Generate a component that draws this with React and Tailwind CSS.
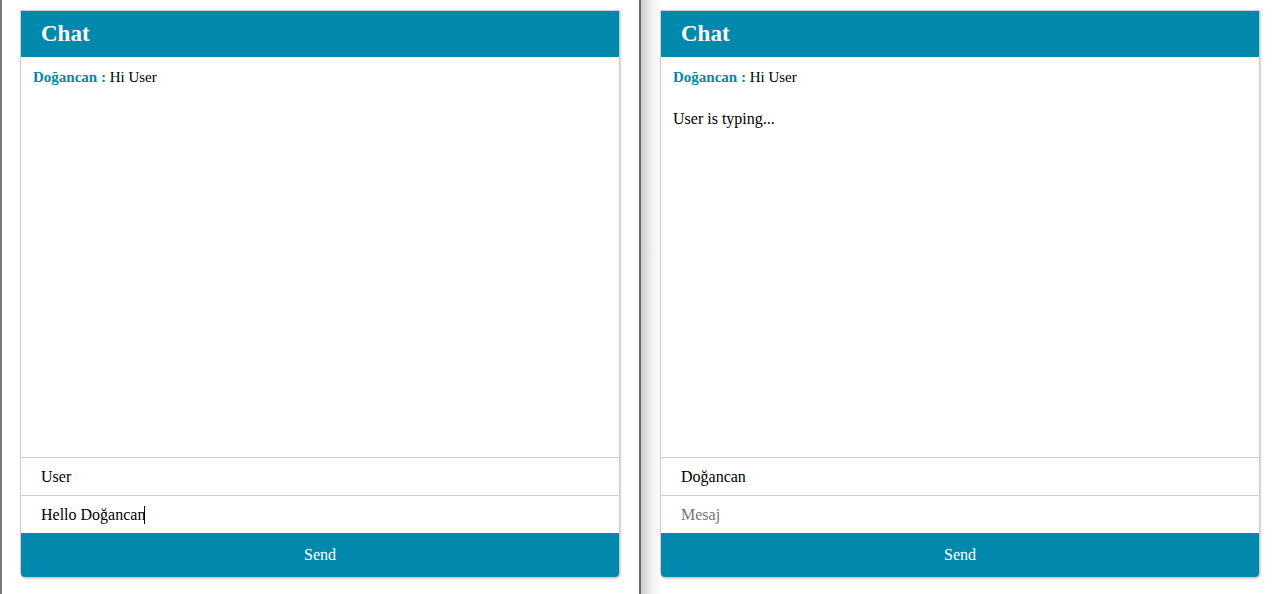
import React from 'react';

function ChatCard({ messages, typing, name, draft, focused }) {
  return (
    <div className="flex h-[568px] w-[600px] flex-col overflow-hidden rounded-b-[5px] border border-[#cccccc] bg-white shadow-[1px_1px_2px_rgba(0,0,0,0.18)]">
      {/* header */}
      <div className="flex h-[46px] items-center bg-[#0088ad] pl-5 text-[23px] font-bold text-white">
        Chat
      </div>

      {/* messages */}
      <div className="flex-1 px-3 pb-3 pt-[11px] text-[16px] leading-[18px] text-black">
        {messages.map((m, i) => (
          <div key={i} className="text-[15px]">
            <span className="font-bold text-[#0088ad]">{m.from} :</span> {m.text}
          </div>
        ))}
        {typing && <div className="mt-[24px]">{typing}</div>}
      </div>

      {/* inputs */}
      <div className="flex h-[38px] items-center border-t border-[#cccccc] pl-5 text-[16px] text-black">
        {name}
      </div>
      <div className="flex h-[38px] items-center border-t border-[#cccccc] pl-5 text-[16px]">
        {draft ? (
          <span className="text-black">{draft}</span>
        ) : (
          <span className="text-[#757575]">Mesaj</span>
        )}
        {focused && <span className="ml-[-1px] inline-block h-[18px] w-px bg-black" />}
      </div>

      <button className="h-[44px] bg-[#0088ad] text-[16px] text-white">Send</button>
    </div>
  );
}

export default function App() {
  return (
    <div
      className="flex h-[594px] w-[1276px] overflow-hidden bg-white"
      style={{ fontFamily: '"Liberation Serif", "Times New Roman", serif' }}
    >
      {/* left window */}
      <div className="w-[641px] shrink-0 border-l-2 border-r-2 border-l-[#7a7a7a] border-r-[#696969] pl-[18px] pt-[10px]">
        <ChatCard
          messages={[{ from: 'Doğancan', text: 'Hi User' }]}
          name="User"
          draft="Hello Doğancan"
          focused
        />
      </div>

      {/* right window */}
      <div className="flex-1 bg-[linear-gradient(to_right,#cdcdcd,#f4f4f4_12px,#ffffff_22px)] pl-[19px] pt-[10px]">
        <ChatCard
          messages={[{ from: 'Doğancan', text: 'Hi User' }]}
          typing="User is typing..."
          name="Doğancan"
        />
      </div>
    </div>
  );
}
